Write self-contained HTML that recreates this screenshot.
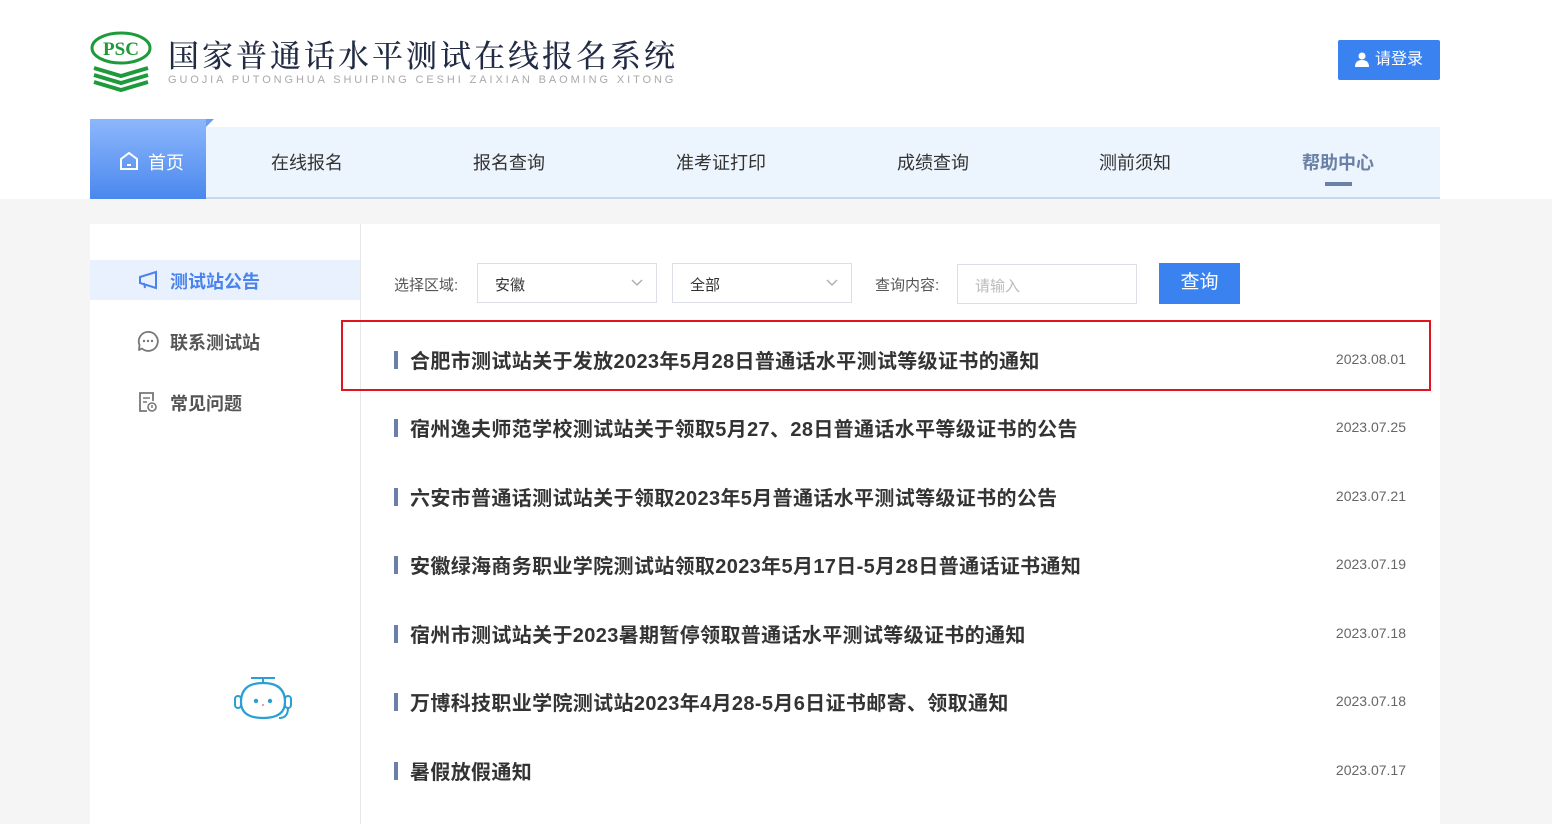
<!DOCTYPE html>
<html><head><meta charset="utf-8"><style>
*{margin:0;padding:0;box-sizing:border-box}
body{width:1552px;height:819px;overflow:hidden;background:#f5f5f5;font-family:"Liberation Sans","Noto Sans CJK SC",sans-serif;position:relative}
.hdr{position:absolute;left:0;top:0;width:1552px;height:199px;background:#fff}
.abs{position:absolute}
.nav{position:absolute;left:90px;top:127px;width:1350px;height:72px;background:#ecf4fd;border-bottom:2px solid #c9d8ec}
.nav span{position:absolute;top:22px;font-size:18px;color:#333}
.home{position:absolute;left:90px;top:119px;width:116px;height:80px;background:linear-gradient(#8db7fb,#4a88ee)}
.card{position:absolute;left:90px;top:224px;width:1350px;height:600px;background:#fff}
.side{position:absolute;left:0;top:0;width:271px;height:600px;border-right:1px solid #e8e8e8}
.si{position:absolute;left:0;width:270px;height:40px;font-size:18px;font-weight:bold;color:#555}
.si span{position:absolute;left:80px;top:8px}
.item{position:absolute;left:304px;width:1012px;height:30px}
.item .bar{position:absolute;left:0;top:5px;width:4px;height:18px;background:#6b80a6}
.item .t{position:absolute;left:16px;top:-1px;font-size:20px;font-weight:bold;color:#333;white-space:nowrap;letter-spacing:0.35px}
.item .d{position:absolute;right:0;top:5px;font-size:14px;color:#666}
.sel{position:absolute;height:40px;border:1px solid #dcdfe6;background:#fff;font-size:15px;color:#333}
</style></head><body>
<div class="hdr"></div>
<svg class="abs" style="left:90px;top:30px" width="64" height="62" viewBox="0 0 64 62">
<ellipse cx="31" cy="18" rx="29" ry="15" fill="none" stroke="#1d9a3a" stroke-width="3"/>
<text x="31" y="25" text-anchor="middle" font-family="Liberation Serif" font-weight="bold" font-size="19" fill="#1d9a3a">PSC</text>
<path d="M4 38 L31 46 L58 38 M4 45 L31 53 L58 45 M4 52 L31 60 L58 52" fill="none" stroke="#1d9a3a" stroke-width="4"/>
</svg>
<div class="abs" style="left:168px;top:31px;font-size:31px;color:#222b44;letter-spacing:3px;font-family:'Noto Serif CJK SC',serif;font-weight:500">国家普通话水平测试在线报名系统</div>
<div class="abs" style="left:168px;top:74px;font-size:11px;color:#aaa;letter-spacing:2.9px">GUOJIA PUTONGHUA SHUIPING CESHI ZAIXIAN BAOMING XITONG</div>
<div class="abs" style="left:1338px;top:40px;width:102px;height:40px;background:#3a82ef;border-radius:2px;color:#fff;font-size:16px;line-height:40px">
<svg class="abs" style="left:17px;top:12px" width="14" height="15" viewBox="0 0 14 15"><circle cx="7" cy="4" r="3.5" fill="#fff"/><path d="M0 15 Q0 8 7 8 Q14 8 14 15Z" fill="#fff"/></svg>
<span style="position:absolute;left:37px">请登录</span></div>
<div class="nav">
<span style="left:181px">在线报名</span><span style="left:383px">报名查询</span><span style="left:586px">准考证打印</span><span style="left:807px">成绩查询</span><span style="left:1009px">测前须知</span>
<span style="left:1212px;color:#6b80a6;font-weight:bold">帮助中心</span>
<div class="abs" style="left:1235px;top:55px;width:27px;height:4px;background:#6b80a6"></div>
</div>
<div class="home">
<svg class="abs" style="left:29px;top:32px" width="20" height="20" viewBox="0 0 20 20"><path d="M2 8 L10 2 L18 8 V18 H2 Z" fill="none" stroke="#fff" stroke-width="2"/><path d="M8 14 H12" stroke="#fff" stroke-width="2"/></svg>
<span class="abs" style="left:58px;top:30px;color:#fff;font-size:18px">首页</span></div>
<div class="abs" style="left:206px;top:119px;width:0;height:0;border-left:8px solid #6a9ef4;border-bottom:8px solid transparent"></div>
<div class="card">
<div class="side">
<div class="si" style="top:36px;background:#e8f1fd;color:#4a83ee"><svg class="abs" style="left:48px;top:10px" width="22" height="20" viewBox="0 0 22 20"><path d="M2 7 L18 2 V18 L2 13 Z M6 13 L7 18" fill="none" stroke="#4a83ee" stroke-width="2"/></svg><span>测试站公告</span></div>
<div class="si" style="top:97px"><svg class="abs" style="left:47px;top:9px" width="22" height="22" viewBox="0 0 22 22"><path d="M5 18.5 A9.5 9.5 0 1 0 2.5 15 L2 20 Z" fill="none" stroke="#777" stroke-width="1.8" stroke-linejoin="round"/><circle cx="7" cy="11" r="1.2" fill="#777"/><circle cx="11" cy="11" r="1.2" fill="#777"/><circle cx="15" cy="11" r="1.2" fill="#777"/></svg><span>联系测试站</span></div>
<div class="si" style="top:158px"><svg class="abs" style="left:48px;top:9px" width="20" height="22" viewBox="0 0 20 22"><path d="M9 20 H2 V2 H15 V10" fill="none" stroke="#777" stroke-width="1.8"/><path d="M5 7 H12 M5 11 H9" stroke="#777" stroke-width="1.6"/><circle cx="14" cy="16" r="4" fill="none" stroke="#777" stroke-width="1.6"/><path d="M14 14 V17" stroke="#777" stroke-width="1.5"/></svg><span>常见问题</span></div>
<svg class="abs" style="left:143px;top:450px" width="60" height="50" viewBox="0 0 60 50"><path d="M18 4 H42 M30 4 V9" stroke="#2a9fd6" stroke-width="2"/><path d="M8 28 Q8 9 30 9 Q52 9 52 28 Q52 44 30 44 Q8 44 8 28Z" fill="none" stroke="#2a9fd6" stroke-width="2.2"/><rect x="2" y="22" width="6" height="12" rx="3" fill="none" stroke="#2a9fd6" stroke-width="2"/><rect x="52" y="22" width="6" height="12" rx="3" fill="none" stroke="#2a9fd6" stroke-width="2"/><path d="M55 34 Q55 44 46 44" fill="none" stroke="#2a9fd6" stroke-width="2"/><circle cx="23" cy="27" r="2.2" fill="#2a9fd6"/><circle cx="37" cy="27" r="2.2" fill="#2a9fd6"/><circle cx="30" cy="31" r="0.9" fill="#e55"/></svg>
</div>
<div class="abs" style="left:304px;top:50px;font-size:15px;color:#555">选择区域:</div>
<div class="sel" style="left:387px;top:39px;width:180px"><span class="abs" style="left:17px;top:10px">安徽</span><svg class="abs" style="left:153px;top:15px" width="12" height="8"><path d="M1 1 L6 6 L11 1" fill="none" stroke="#aaa" stroke-width="1.3"/></svg></div>
<div class="sel" style="left:582px;top:39px;width:180px"><span class="abs" style="left:17px;top:10px">全部</span><svg class="abs" style="left:153px;top:15px" width="12" height="8"><path d="M1 1 L6 6 L11 1" fill="none" stroke="#aaa" stroke-width="1.3"/></svg></div>
<div class="abs" style="left:785px;top:50px;font-size:15px;color:#555">查询内容:</div>
<div class="sel" style="left:867px;top:40px;width:180px"><span class="abs" style="left:17px;top:10px;color:#bbb">请输入</span></div>
<div class="abs" style="left:1069px;top:39px;width:81px;height:41px;background:#3a82ef;color:#fff;font-size:19px;text-align:center;line-height:39px">查询</div>
<div class="abs" style="left:251px;top:96px;width:1090px;height:71px;border:2px solid #e0141e"></div>
<div class="item" style="top:122px"><div class="bar"></div><div class="t">合肥市测试站关于发放2023年5月28日普通话水平测试等级证书的通知</div><div class="d">2023.08.01</div></div>
<div class="item" style="top:190px"><div class="bar"></div><div class="t">宿州逸夫师范学校测试站关于领取5月27、28日普通话水平等级证书的公告</div><div class="d">2023.07.25</div></div>
<div class="item" style="top:259px"><div class="bar"></div><div class="t">六安市普通话测试站关于领取2023年5月普通话水平测试等级证书的公告</div><div class="d">2023.07.21</div></div>
<div class="item" style="top:327px"><div class="bar"></div><div class="t">安徽绿海商务职业学院测试站领取2023年5月17日-5月28日普通话证书通知</div><div class="d">2023.07.19</div></div>
<div class="item" style="top:396px"><div class="bar"></div><div class="t">宿州市测试站关于2023暑期暂停领取普通话水平测试等级证书的通知</div><div class="d">2023.07.18</div></div>
<div class="item" style="top:464px"><div class="bar"></div><div class="t">万博科技职业学院测试站2023年4月28-5月6日证书邮寄、领取通知</div><div class="d">2023.07.18</div></div>
<div class="item" style="top:533px"><div class="bar"></div><div class="t">暑假放假通知</div><div class="d">2023.07.17</div></div>
</div>
</body></html>
